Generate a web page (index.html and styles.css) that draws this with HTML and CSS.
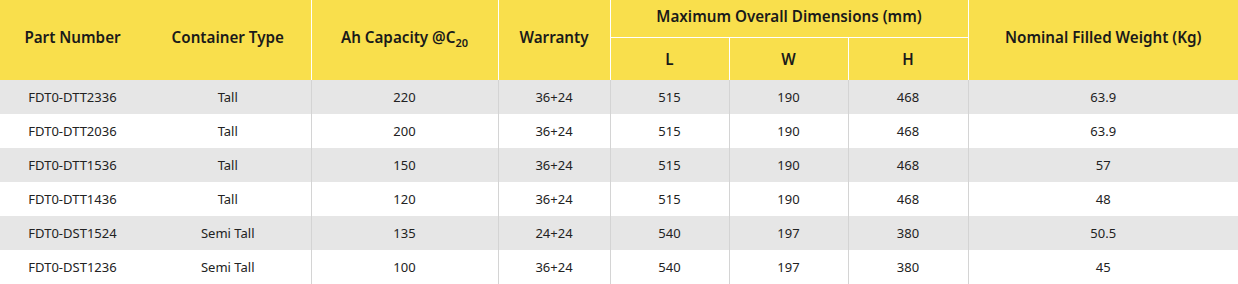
FILE: index.html
```html
<!DOCTYPE html>
<html>
<head>
<meta charset="utf-8">
<link rel="stylesheet" href="styles.css">
</head>
<body>
<table class="spec">
  <colgroup>
    <col class="c1"><col class="c2"><col class="c3"><col class="c4">
    <col class="c5"><col class="c6"><col class="c7"><col class="c8">
  </colgroup>
  <thead>
    <tr class="h1">
      <th rowspan="2" class="nb tall">Part Number</th>
      <th rowspan="2" class="tall">Container Type</th>
      <th rowspan="2" class="tall">Ah Capacity @C<sub>20</sub></th>
      <th rowspan="2" class="tall">Warranty</th>
      <th colspan="3" class="group">Maximum Overall Dimensions (mm)</th>
      <th rowspan="2" class="last tall">Nominal Filled Weight (Kg)</th>
    </tr>
    <tr class="h2">
      <th>L</th>
      <th>W</th>
      <th>H</th>
    </tr>
  </thead>
  <tbody>
    <tr><td class="nb">FDT0-DTT2336</td><td>Tall</td><td>220</td><td>36+24</td><td>515</td><td>190</td><td>468</td><td class="last">63.9</td></tr>
    <tr><td class="nb">FDT0-DTT2036</td><td>Tall</td><td>200</td><td>36+24</td><td>515</td><td>190</td><td>468</td><td class="last">63.9</td></tr>
    <tr><td class="nb">FDT0-DTT1536</td><td>Tall</td><td>150</td><td>36+24</td><td>515</td><td>190</td><td>468</td><td class="last">57</td></tr>
    <tr><td class="nb">FDT0-DTT1436</td><td>Tall</td><td>120</td><td>36+24</td><td>515</td><td>190</td><td>468</td><td class="last">48</td></tr>
    <tr><td class="nb">FDT0-DST1524</td><td>Semi Tall</td><td>135</td><td>24+24</td><td>540</td><td>197</td><td>380</td><td class="last">50.5</td></tr>
    <tr><td class="nb">FDT0-DST1236</td><td>Semi Tall</td><td>100</td><td>36+24</td><td>540</td><td>197</td><td>380</td><td class="last">45</td></tr>
  </tbody>
</table>
</body>
</html>
```

FILE: styles.css
```css
html, body {
  margin: 0;
  padding: 0;
  background: #ffffff;
}

.spec {
  width: 1238px;
  border-collapse: collapse;
  table-layout: fixed;
  font-family: "Noto Sans", "Open Sans", sans-serif;
}

.c1 { width: 145px; }
.c2 { width: 166px; }
.c3 { width: 187px; }
.c4 { width: 112px; }
.c5 { width: 119px; }
.c6 { width: 119px; }
.c7 { width: 120px; }
.c8 { width: 270px; }

.spec th {
  background: #f9df4c;
  color: #1a1a1a;
  font-size: 15.2px;
  font-weight: 600;
  text-align: center;
  vertical-align: middle;
  padding: 0 4px;
  border-right: 1px solid #ffffff;
  border-bottom: none;
}

.spec .h1 { height: 37px; }
.spec .h2 { height: 43px; }

.spec th.tall { padding-bottom: 6px; }
.spec th.group {
  padding-bottom: 4px;
  border-bottom: 1px solid #ffffff;
}

.spec th sub {
  font-size: 11px;
  line-height: 0;
  vertical-align: -4px;
}

.spec td {
  height: 34px;
  padding: 0 4px;
  font-size: 13px;
  color: #222222;
  text-align: center;
  vertical-align: middle;
  border-right: 1px solid #d4d4d4;
}

.spec .nb { border-right: none; }
.spec .last { border-right: none; }

.spec tbody tr:nth-child(odd) td { background: #e6e6e6; }
.spec tbody tr:nth-child(even) td { background: #ffffff; }
```
